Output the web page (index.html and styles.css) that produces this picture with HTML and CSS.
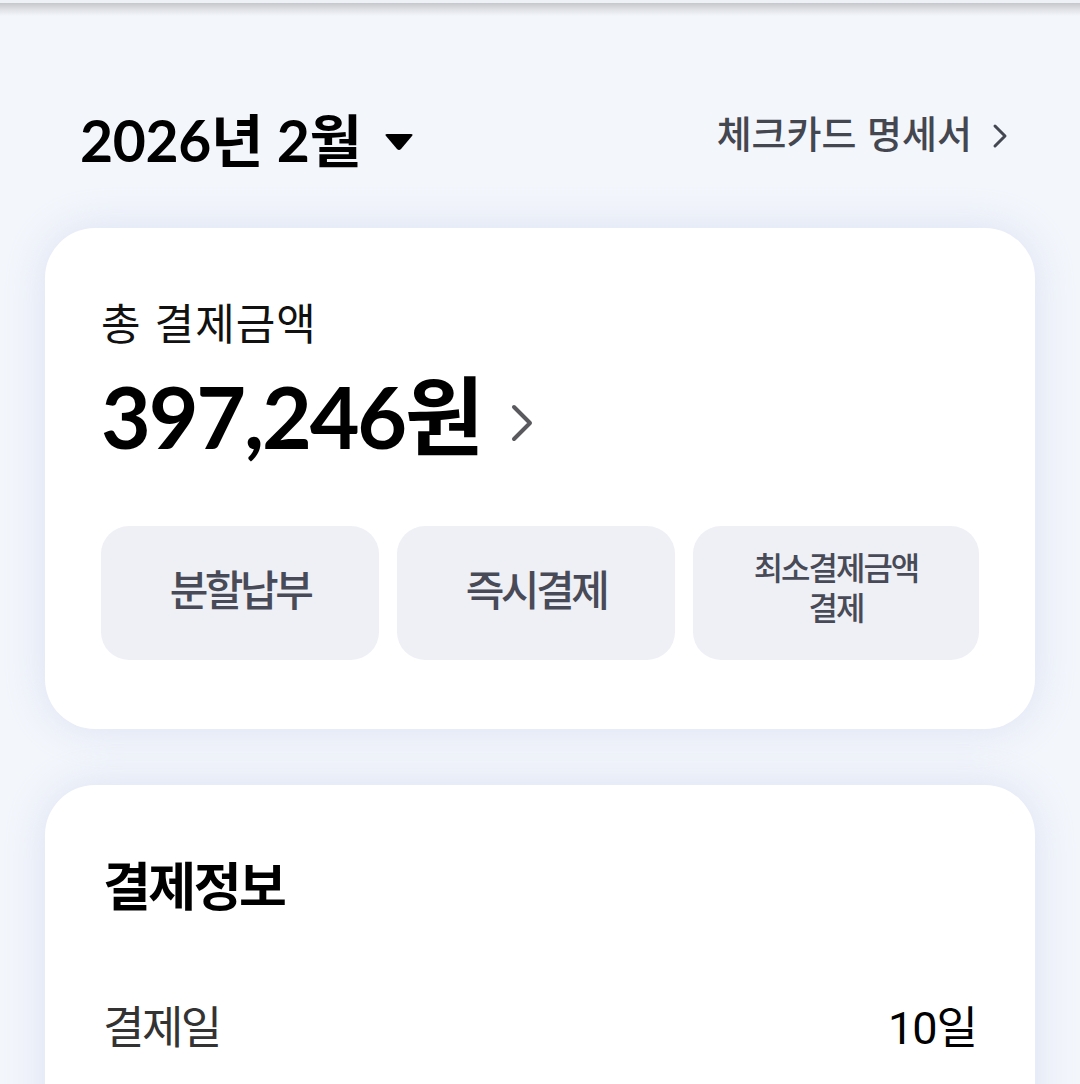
FILE: index.html
```html
<!DOCTYPE html>
<html lang="ko">
<head>
<meta charset="utf-8">
<link rel="stylesheet" href="styles.css">
</head>
<body>
<div class="topbar"></div>
<div class="topshade"></div>
<main class="page">
  <header class="head">
    <div class="month">
      <span class="month-text">2026년 2월</span>
      <svg class="caret" width="30" height="22" viewBox="0 0 30 22"><path d="M3 3 H27 Q29.5 3 28 5 L17 18 Q15 20 13 18 L2 5 Q0.5 3 3 3 Z" fill="#000"/></svg>
    </div>
    <a class="statement">체크카드 명세서
      <svg class="chev-s" width="16" height="26" viewBox="0 0 16 26"><path d="M3 3 L13 13 L3 23" fill="none" stroke="#444650" stroke-width="3" stroke-linecap="round" stroke-linejoin="round"/></svg>
    </a>
  </header>

  <section class="card total">
    <div class="label">총 결제금액</div>
    <div class="amount-row">
      <span class="amount">397,246원</span>
      <svg class="chev-l" width="24" height="40" viewBox="0 0 24 40"><path d="M4 4 L20 20 L4 36" fill="none" stroke="#5a5a5e" stroke-width="4" stroke-linecap="round" stroke-linejoin="round"/></svg>
    </div>
    <div class="actions">
      <button class="btn">분할납부</button>
      <button class="btn">즉시결제</button>
      <button class="btn small"><span class="ln">최소결제금액</span><span class="ln">결제</span></button>
    </div>
  </section>

  <section class="card info">
    <h2 class="info-title">결제정보</h2>
    <div class="row">
      <span class="row-key">결제일</span>
      <span class="row-val">10일</span>
    </div>
  </section>
</main>
</body>
</html>
```

FILE: styles.css
```css
* { box-sizing: border-box; }
html, body { margin: 0; padding: 0; }
body {
  background: #f3f6fb;
  font-family: Lato, "Noto Sans CJK KR", sans-serif;
  color: #000;
  overflow: hidden;
  height: 1084px;
}
.topbar { height: 3px; background: #eef1f5; }
.topshade {
  height: 13px;
  background: linear-gradient(#c6c7ca, #dfe1e5 50%, #f3f6fb);
}
.page { padding: 0 45px; }
.head {
  display: flex;
  justify-content: space-between;
  padding: 90px 27px 0 35px;
  height: 212px;
  align-items: flex-start;
}
.month { display: flex; align-items: center; gap: 22px; }
.month-text {
  font-size: 57px;
  font-weight: 700;
  letter-spacing: -0.3px;
  line-height: 68px;
}
.caret { margin-top: 4px; }
.statement {
  display: flex;
  align-items: center;
  gap: 20px;
  font-family: "Noto Sans CJK KR", sans-serif;
  font-size: 38px;
  font-weight: 500;
  color: #444650;
  line-height: 68px;
  letter-spacing: 0px;
  margin-top: -8px;
}
.chev-s { margin-top: 8px; }
.card {
  background: #fff;
  border-radius: 50px;
  box-shadow: 0 0 40px rgba(190, 202, 235, 0.45);
}
.total {
  padding: 66px 56px 68px 56px;
  height: 501px;
}
.label {
  font-family: "Noto Sans CJK KR", sans-serif;
  font-size: 43px;
  line-height: 54px;
  color: #111;
  letter-spacing: 1px;
}
.amount-row { display: flex; align-items: center; gap: 28px; margin-top: 18px; height: 100px; }
.amount {
  font-size: 86px;
  font-weight: 700;
  letter-spacing: -2.2px;
  line-height: 100px;
}
.chev-l { margin-top: 14px; }
.actions {
  display: grid;
  grid-template-columns: 278px 278px 286px;
  gap: 18px;
  margin-top: 60px;
}
.btn {
  height: 134px;
  border: 0;
  border-radius: 28px;
  background: #eff0f5;
  color: #484b57;
  font-family: "Noto Sans CJK KR", sans-serif;
  font-size: 42px;
  font-weight: 500;
  letter-spacing: -3.5px;
  padding: 0 0 12px 0;
}
.btn.small {
  font-size: 32px;
  line-height: 40px;
  letter-spacing: -2px;
  padding-bottom: 14px;
  display: flex;
  flex-direction: column;
  align-items: center;
  justify-content: center;
}
.ln { display: block; }
.info { margin-top: 56px; padding: 64px 58px 0 58px; height: 400px; }
.info-title {
  margin: 0;
  font-family: "Noto Sans CJK KR", sans-serif;
  font-size: 52px;
  font-weight: 700;
  line-height: 70px;
  letter-spacing: -2.5px;
}
.row {
  display: flex;
  justify-content: space-between;
  margin-top: 80px;
  font-family: Roboto, "Noto Sans CJK KR", sans-serif;
  font-size: 45px;
  line-height: 60px;
  letter-spacing: -2.5px;
}
.row-key { color: #333; }
.row-val { color: #000; letter-spacing: -1px; }
```
